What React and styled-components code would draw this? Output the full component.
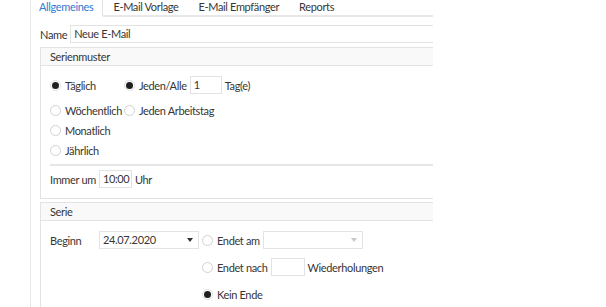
import React from "react";
import styled, { createGlobalStyle } from "styled-components";

const GlobalStyle = createGlobalStyle`
  html, body { margin: 0; padding: 0; background: #fff; }
  body {
    font-family: Lato, "Open Sans", "DejaVu Sans", sans-serif;
    font-size: 11px;
    letter-spacing: -0.35px;
    color: #363636;
  }
`;

const Page = styled.div`
  display: flex;
  padding-left: 30px;
  height: 307px;
  overflow: hidden;
`;

const Panel = styled.div`
  width: 402px;
  border-left: 1px solid #e6e6e6;
  overflow: hidden;
  display: flex;
  flex-direction: column;
`;

const TabBar = styled.div`
  display: flex;
  height: 17px;
`;

const Tab = styled.div`
  height: 15px;
  line-height: 14px;
  padding: ${(p) => (p.$active ? "0 9px 0 8px" : "0 10px")};
  white-space: nowrap;
  color: ${(p) => (p.$active ? "#2f7bd1" : "#363636")};
  border-right: ${(p) => (p.$active ? "1px solid #e3e3e3" : "none")};
  border-bottom: ${(p) => (p.$active ? "2px solid #fff" : "2px solid #e8e8e8")};
`;

const TabFill = styled.div`
  flex: 1;
  height: 15px;
  border-bottom: 2px solid #e8e8e8;
`;

const Content = styled.div`
  padding: 8px 0 0 9px;
  display: flex;
  flex-direction: column;
`;

const NameRow = styled.div`
  display: flex;
  align-items: center;
  gap: 3px;
  height: 18px;
`;

const Input = styled.div`
  box-sizing: border-box;
  height: 18px;
  width: ${(p) => p.$w}px;
  border: 1px solid #e3e3e3;
  padding-left: 3px;
  line-height: 16px;
  white-space: nowrap;
  flex-shrink: 0;
`;

const Group = styled.div`
  width: 520px;
  margin-top: ${(p) => p.$mt}px;
  border: 1px solid #e3e3e3;
`;

const GroupHeader = styled.div`
  height: 17px;
  line-height: 17px;
  padding-left: 9px;
  background: #f9f9f9;
  border-bottom: 1px solid #e3e3e3;
`;

const GroupBody = styled.div`
  padding: ${(p) => p.$pad};
  display: flex;
  flex-direction: column;
`;

const Row = styled.div`
  display: flex;
  align-items: center;
  gap: 3px;
  height: ${(p) => p.$h || 20}px;
`;

const PatternGrid = styled.div`
  display: grid;
  grid-template-columns: max-content max-content;
  grid-template-rows: 20px 25px 20px 20px;
  align-items: end;
`;

const Cell = styled.div`
  display: flex;
  align-items: center;
  gap: 3px;
  height: 20px;
`;

const RadioWrap = styled.label`
  display: flex;
  align-items: center;
  gap: 4px;
  white-space: nowrap;
  padding-right: ${(p) => p.$pr || 0}px;
`;

const Circle = styled.span`
  box-sizing: border-box;
  width: 11px;
  height: 11px;
  border-radius: 50%;
  border: 1px solid ${(p) => (p.$on ? "#dedede" : "#d2d2d2")};
  background: #fff;
  display: flex;
  align-items: center;
  justify-content: center;
  flex-shrink: 0;
  &::after {
    content: "";
    display: ${(p) => (p.$on ? "block" : "none")};
    width: 7px;
    height: 7px;
    border-radius: 50%;
    background: #1f1f1f;
  }
`;

const Radio = ({ on, children, pr }) => (
  <RadioWrap $pr={pr}>
    <Circle $on={on} />
    <span>{children}</span>
  </RadioWrap>
);

const Separator = styled.div`
  height: 2px;
  background: #e6e6e6;
  margin: 4px 0 4px 0;
`;

const SerieGrid = styled.div`
  display: grid;
  grid-template-columns: 49px 100px 3px 1fr;
  grid-template-rows: 18px 18px 18px;
  row-gap: 9px;
  align-items: center;
`;

const Select = styled.div`
  box-sizing: border-box;
  height: 18px;
  width: 100px;
  border: 1px solid #e3e3e3;
  padding: 0 5px 0 3px;
  display: flex;
  align-items: center;
  line-height: 16px;
  flex-shrink: 0;
  &::after {
    content: "";
    margin-left: auto;
    width: 0;
    height: 0;
    border-left: 3.5px solid transparent;
    border-right: 3.5px solid transparent;
    border-top: 4px solid ${(p) => (p.$disabled ? "#c8c8c8" : "#333")};
  }
`;

const SerieCol = styled.div`
  grid-column: 4;
  display: flex;
  align-items: center;
  gap: 3px;
  white-space: nowrap;
`;

const Label = styled.span`
  white-space: nowrap;
`;

export default function App() {
  return (
    <>
      <GlobalStyle />
      <Page>
        <Panel>
          <TabBar>
            <Tab $active>Allgemeines</Tab>
            <Tab>E-Mail Vorlage</Tab>
            <Tab>E-Mail Empfänger</Tab>
            <Tab>Reports</Tab>
            <TabFill />
          </TabBar>
          <Content>
            <NameRow>
              <Label>Name</Label>
              <Input $w={480}>Neue E-Mail</Input>
            </NameRow>

            <Group $mt={4}>
              <GroupHeader>Serienmuster</GroupHeader>
              <GroupBody $pad="9px 9px 10px 9px">
                <PatternGrid>
                  <Cell>
                    <Radio on pr={20}>Täglich</Radio>
                  </Cell>
                  <Cell>
                    <Radio on>Jeden/Alle</Radio>
                    <Input $w={32}>1</Input>
                    <Label>Tag(e)</Label>
                  </Cell>
                  <Cell>
                    <Radio pr={2}>Wöchentlich</Radio>
                  </Cell>
                  <Cell>
                    <Radio>Jeden Arbeitstag</Radio>
                  </Cell>
                  <Cell>
                    <Radio>Monatlich</Radio>
                  </Cell>
                  <div />
                  <Cell>
                    <Radio>Jährlich</Radio>
                  </Cell>
                  <div />
                </PatternGrid>
                <Separator />
                <Row $h={18}>
                  <Label>Immer um</Label>
                  <Input $w={33}>10:00</Input>
                  <Label>Uhr</Label>
                </Row>
              </GroupBody>
            </Group>

            <Group $mt={3}>
              <GroupHeader>Serie</GroupHeader>
              <GroupBody $pad="10px 9px 10px 9px">
                <SerieGrid>
                  <Label>Beginn</Label>
                  <Select>24.07.2020</Select>
                  <div />
                  <SerieCol>
                    <Radio>Endet am</Radio>
                    <Select $disabled />
                  </SerieCol>
                  <SerieCol>
                    <Radio>Endet nach</Radio>
                    <Input $w={34} />
                    <Label>Wiederholungen</Label>
                  </SerieCol>
                  <SerieCol>
                    <Radio on>Kein Ende</Radio>
                  </SerieCol>
                </SerieGrid>
              </GroupBody>
            </Group>
          </Content>
        </Panel>
      </Page>
    </>
  );
}
